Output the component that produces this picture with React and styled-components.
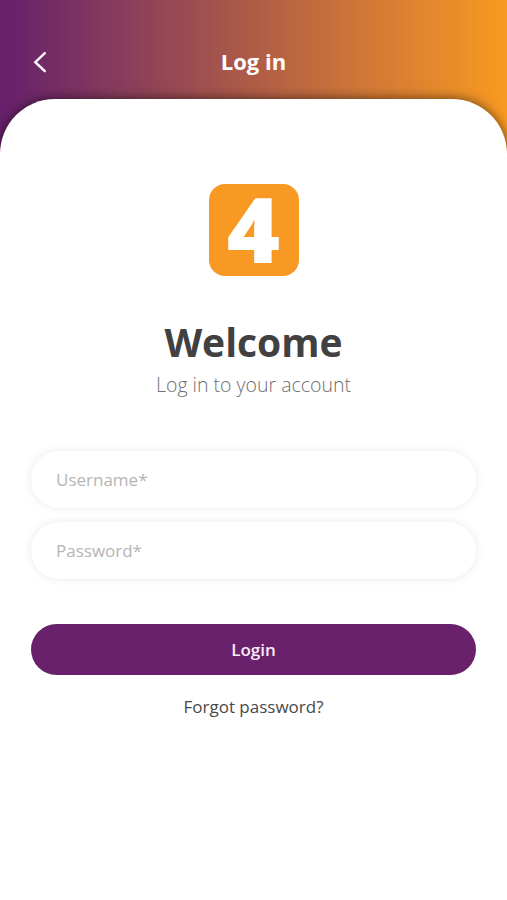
import React from "react";
import styled, { createGlobalStyle } from "styled-components";

const GlobalStyle = createGlobalStyle`
  * {
    box-sizing: border-box;
  }
  body {
    margin: 0;
    background-color: #fff;
    font-family: "Open Sans", "Noto Sans", sans-serif;
  }
`;

const PageContainer = styled.div`
  width: 100%;
  height: 900px;
  overflow: hidden;
  background: linear-gradient(90deg, #68216a 0%, #6b246a 4%, #f99a21 100%)
    top / 100% 154px no-repeat;
`;

const Header = styled.header`
  display: grid;
  grid-template-columns: 60px 1fr 60px;
  align-items: center;
  height: 98.5px;
  padding-top: 25px;
`;

const BackButton = styled.button`
  display: flex;
  justify-content: flex-end;
  padding: 0 13px 0 0;
  border: none;
  background: none;
`;

const HeaderTitle = styled.h1`
  margin: 0;
  padding-bottom: 2px;
  color: #fff;
  font-weight: 700;
  font-size: 22px;
  line-height: 30px;
  text-align: center;
`;

const Card = styled.main`
  display: flex;
  flex-direction: column;
  align-items: center;
  height: 802px;
  padding: 85.5px 31px 0;
  border-radius: 55px 55px 0 0;
  background-color: #fff;
  box-shadow: 0 0 12px 0 rgb(0 0 0 / 60%);
`;

const Logo = styled.div`
  display: flex;
  justify-content: center;
  align-items: center;
  width: 90px;
  height: 92px;
  border-radius: 16px;
  background-color: #f89923;
  color: #fff;
  font-weight: 800;
  font-size: 91px;
  line-height: 88px;

  span {
    height: 92px;
  }
`;

const Title = styled.h2`
  margin: 39px 0 0;
  color: #414141;
  font-weight: 700;
  font-size: 39px;
  line-height: 54px;
`;

const Subtitle = styled.p`
  margin: 2px 0 0;
  color: #707070;
  font-weight: 300;
  font-size: 19.5px;
  line-height: 28px;
`;

const Form = styled.form`
  display: flex;
  flex-direction: column;
  width: 100%;
  margin-top: 52px;
`;

const Field = styled.input`
  width: 100%;
  height: 57px;
  margin-bottom: 14px;
  padding: 0 25px;
  border: none;
  border-radius: 29px;
  outline: none;
  background-color: #fff;
  box-shadow: 0 0 9px 1px rgb(0 0 0 / 7%);
  color: #414141;
  font-family: inherit;
  font-size: 17px;

  &::placeholder {
    color: #b5b5b5;
    opacity: 1;
  }
`;

const LoginButton = styled.button`
  height: 51px;
  margin-top: 31px;
  border: none;
  border-radius: 26px;
  background-color: #68216a;
  color: #fbeafa;
  font-family: inherit;
  font-weight: 600;
  font-size: 17px;
`;

const ForgotLink = styled.a`
  margin-top: 20px;
  color: #494949;
  font-size: 17px;
  line-height: 24px;
`;

function App() {
  return (
    <PageContainer>
      <GlobalStyle />
      <Header>
        <BackButton type="button" aria-label="Back">
          <svg width="14" height="22" viewBox="0 0 14 22" fill="none">
            <path
              d="M11.8 2.2 L2.3 11.2 L11.8 20.2"
              stroke="#fff"
              strokeWidth="2.4"
              strokeLinecap="round"
            />
          </svg>
        </BackButton>
        <HeaderTitle>Log in</HeaderTitle>
      </Header>
      <Card>
        <Logo>
          <span>4</span>
        </Logo>
        <Title>Welcome</Title>
        <Subtitle>Log in to your account</Subtitle>
        <Form>
          <Field type="text" placeholder="Username*" />
          <Field type="password" placeholder="Password*" />
          <LoginButton type="button">Login</LoginButton>
        </Form>
        <ForgotLink>Forgot password?</ForgotLink>
      </Card>
    </PageContainer>
  );
}

export default App;
